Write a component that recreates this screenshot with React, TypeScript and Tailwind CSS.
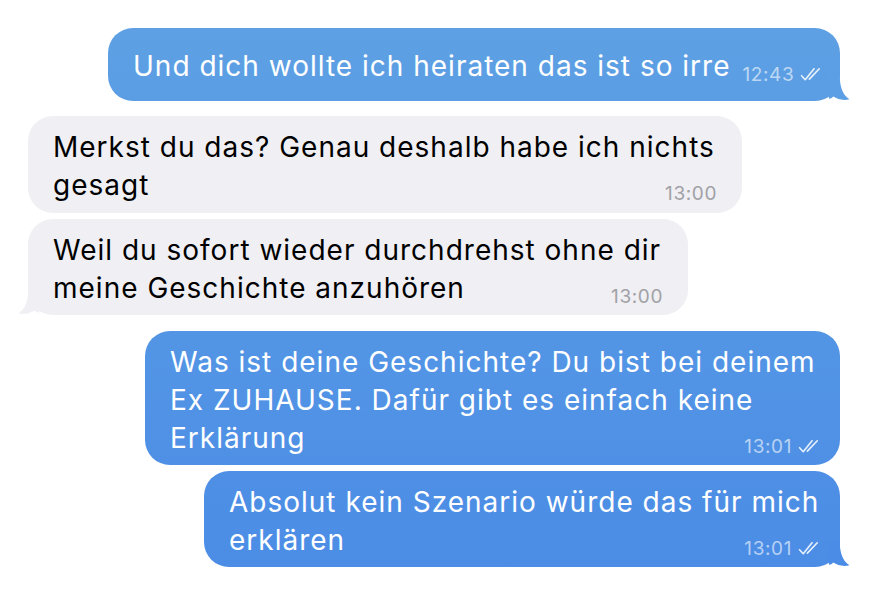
import React from 'react';

type Msg = {
  out: boolean;
  lines: string[];
  time: string;
  width: string;
  tail?: boolean;
  tailColor?: string;
  gap: string;
  pad: string;
};

const messages: Msg[] = [
  { out: true, lines: ['Und dich wollte ich heiraten das ist so irre'], time: '12:43', width: 'w-[732px]', tail: true, tailColor: '#5d9fe4', gap: 'mt-[28px]', pad: 'pt-[19px] pb-[16px]' },
  { out: false, lines: ['Merkst du das? Genau deshalb habe ich nichts', 'gesagt'], time: '13:00', width: 'w-[714px]', gap: 'mt-[15px]', pad: 'pt-[12px] pb-[9px]' },
  { out: false, lines: ['Weil du sofort wieder durchdrehst ohne dir', 'meine Geschichte anzuhören'], time: '13:00', width: 'w-[660px]', tail: true, tailColor: '#efeff4', gap: 'mt-[6px]', pad: 'pt-[12px] pb-[8px]' },
  { out: true, lines: ['Was ist deine Geschichte? Du bist bei deinem', 'Ex ZUHAUSE. Dafür gibt es einfach keine', 'Erklärung'], time: '13:01', width: 'w-[695px]', gap: 'mt-[16px]', pad: 'pt-[12px] pb-[8px]' },
  { out: true, lines: ['Absolut kein Szenario würde das für mich', 'erklären'], time: '13:01', width: 'w-[636px]', tail: true, tailColor: '#4b8ce6', gap: 'mt-[6px]', pad: 'pt-[12px] pb-[8px]' },
];

function Checks() {
  return (
    <svg width="25" height="15" viewBox="0 0 24 14" fill="none" className="ml-[6px] mb-[3px]">
      <path d="M1.5 8.2 L5 12 L13.5 1.5" stroke="rgba(255,255,255,0.85)" strokeWidth="1.6" strokeLinecap="round" strokeLinejoin="round" />
      <path d="M9 11.5 L18.5 1.5" stroke="rgba(255,255,255,0.85)" strokeWidth="1.6" strokeLinecap="round" />
    </svg>
  );
}

function Tail({ out, color }: { out: boolean; color: string }) {
  if (out) {
    return (
      <svg width="28" height="26" viewBox="0 0 26 24" className="absolute bottom-0 right-[-17px]">
        <path d="M0 0 H10 C10 10 12 18 19 22.5 C13 24 8 22.5 4 20 C2 22 1 22 0 22 Z" fill={color} />
      </svg>
    );
  }
  return (
    <svg width="28" height="26" viewBox="0 0 26 24" className="absolute bottom-0 left-[-17px]">
      <path d="M26 0 H16 C16 10 14 18 7 22.5 C13 24 18 22.5 22 20 C24 22 25 22 26 22 Z" fill={color} />
    </svg>
  );
}

function Bubble({ m }: { m: Msg }) {
  const last = m.lines.length - 1;
  return (
    <div className={`flex ${m.out ? 'justify-end pr-[35px]' : 'justify-start pl-[28px]'} ${m.gap}`}>
      <div
        className={`relative ${m.width} rounded-[25px] pl-[25px] ${m.out ? 'pr-[17px]' : 'pr-[25px]'} ${m.pad} ${
          m.out ? 'bg-fixed bg-linear-to-b from-[#5fa1e3] to-[#4a8be6] text-white' : 'bg-[#efeff4] text-black'
        }`}
      >
        {m.tail && <Tail out={m.out} color={m.tailColor || '#fff'} />}
        {m.lines.map((line, i) =>
          i < last ? (
            <div key={i} className="text-[28px] leading-[38px] tracking-[1px] whitespace-nowrap">{line}</div>
          ) : (
            <div key={i} className="flex items-end justify-between">
              <span className="text-[28px] leading-[38px] tracking-[1px] whitespace-nowrap">{line}</span>
              <span className={`flex items-end text-[19px] leading-[20px] tracking-[0.6px] ml-[12px] mb-0 ${m.out ? 'text-white/60' : 'text-[#a1a1a6]'}`}>
                {m.time}
                {m.out && <Checks />}
              </span>
            </div>
          )
        )}
      </div>
    </div>
  );
}

export default function App() {
  return (
    <div className="w-[875px] h-[603px] bg-white overflow-hidden font-['Inter',sans-serif]">
      {messages.map((m, i) => (
        <Bubble key={i} m={m} />
      ))}
    </div>
  );
}
